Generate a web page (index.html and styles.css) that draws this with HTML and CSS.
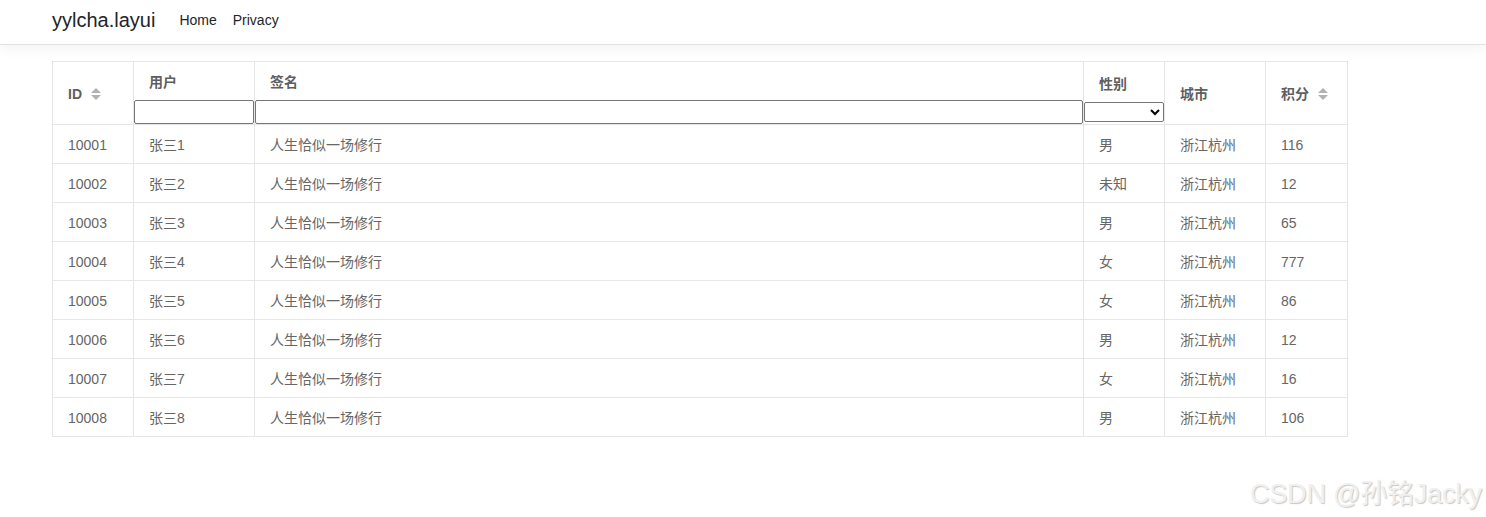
FILE: index.html
```html
<!DOCTYPE html>
<html lang="zh">
<head>
<meta charset="utf-8">
<title>yylcha.layui</title>
<link rel="stylesheet" href="styles.css">
</head>
<body>
<header class="navbar">
  <a class="brand" href="#">yylcha.layui</a>
  <nav class="nav">
    <a class="nav-link" href="#">Home</a>
    <a class="nav-link" href="#">Privacy</a>
  </nav>
</header>
<main class="main">
  <table class="grid">
    <colgroup>
      <col class="c-id"><col class="c-user"><col class="c-sign"><col class="c-sex"><col class="c-city"><col class="c-score">
    </colgroup>
    <thead>
      <tr>
        <th class="th-mid"><span class="th-label">ID</span><span class="sort"><svg width="10" height="14" viewBox="0 0 10 14"><path d="M0 6 L5 1 L10 6 Z" fill="#b2b2b2"/><path d="M0 8 L5 13 L10 8 Z" fill="#b2b2b2"/></svg></span></th>
        <th class="th-filter"><div class="th-text">用户</div><input class="filter-input" type="text"></th>
        <th class="th-filter"><div class="th-text">签名</div><input class="filter-input" type="text"></th>
        <th class="th-filter th-select"><div class="th-text">性别</div><select class="filter-select"><option></option><option>男</option><option>女</option><option>未知</option></select></th>
        <th class="th-mid"><span class="th-label">城市</span></th>
        <th class="th-mid"><span class="th-label">积分</span><span class="sort"><svg width="10" height="14" viewBox="0 0 10 14"><path d="M0 6 L5 1 L10 6 Z" fill="#b2b2b2"/><path d="M0 8 L5 13 L10 8 Z" fill="#b2b2b2"/></svg></span></th>
      </tr>
    </thead>
    <tbody>
      <tr><td>10001</td><td>张三1</td><td>人生恰似一场修行</td><td>男</td><td>浙江杭州</td><td>116</td></tr>
      <tr><td>10002</td><td>张三2</td><td>人生恰似一场修行</td><td>未知</td><td>浙江杭州</td><td>12</td></tr>
      <tr><td>10003</td><td>张三3</td><td>人生恰似一场修行</td><td>男</td><td>浙江杭州</td><td>65</td></tr>
      <tr><td>10004</td><td>张三4</td><td>人生恰似一场修行</td><td>女</td><td>浙江杭州</td><td>777</td></tr>
      <tr><td>10005</td><td>张三5</td><td>人生恰似一场修行</td><td>女</td><td>浙江杭州</td><td>86</td></tr>
      <tr><td>10006</td><td>张三6</td><td>人生恰似一场修行</td><td>男</td><td>浙江杭州</td><td>12</td></tr>
      <tr><td>10007</td><td>张三7</td><td>人生恰似一场修行</td><td>女</td><td>浙江杭州</td><td>16</td></tr>
      <tr><td>10008</td><td>张三8</td><td>人生恰似一场修行</td><td>男</td><td>浙江杭州</td><td>106</td></tr>
    </tbody>
  </table>
</main>
<div class="watermark">CSDN @孙铭Jacky</div>
</body>
</html>
```
FILE: styles.css
```css
* { box-sizing: border-box; }
html, body { margin: 0; padding: 0; }
body {
  font-family: "Liberation Sans", Arial, "Noto Sans CJK SC", sans-serif;
  color: #212529;
  background: #fff;
  width: 1486px;
  height: 517px;
  overflow: hidden;
  position: relative;
}
.navbar {
  height: 45px;
  display: flex;
  align-items: center;
  padding-left: 52px;
  border-bottom: 1px solid #e3e3e3;
  box-shadow: 0 4px 12px rgba(0,0,0,0.05);
}
.brand {
  font-size: 20px;
  color: #212529;
  text-decoration: none;
  margin-right: 16px;
  line-height: 30px;
  margin-top: -4px;
}
.nav { display: flex; margin-top: -4px; }
.nav-link {
  font-size: 14px;
  color: #212529;
  text-decoration: none;
  padding: 0 8px;
  line-height: 20px;
}
.main { padding: 16px 0 0 52px; }
.grid {
  width: 1295px;
  border-collapse: collapse;
  table-layout: fixed;
  font-size: 14px;
  color: #666;
  font-family: "Liberation Sans", Arial, "Noto Sans CJK SC", sans-serif;
}
.c-id { width: 81px; }
.c-user { width: 121px; }
.c-sign { width: 829px; }
.c-sex { width: 81px; }
.c-city { width: 101px; }
.c-score { width: 82px; }
.grid th, .grid td {
  border: 1px solid #e6e6e6;
  text-align: left;
}
.grid th {
  height: 63px;
  font-weight: bold;
  color: #5f5f5f;
  padding: 0;
}
.th-mid {
  vertical-align: middle;
  padding: 0 15px !important;
  line-height: 20px;
}
.th-label { display: inline-block; vertical-align: middle; }
.sort { display: inline-block; vertical-align: middle; margin-left: 9px; line-height: 0; }
.th-filter { vertical-align: top; }
.th-text {
  padding: 10px 15px 0;
  line-height: 20px;
  height: 38px;
}
.th-select .th-text { padding-top: 12px; height: 40px; }
.filter-input {
  display: block;
  width: 100%;
  height: 24px;
  margin: 0;
  border: 1px solid #767676;
  border-radius: 2px;
  background: #fff;
  padding: 1px 2px;
  font-size: 13px;
}
.filter-select {
  display: block;
  width: 100%;
  height: 20px;
  margin: 0;
  border: 1px solid #767676;
  border-radius: 2px;
  background: #fff;
  font-size: 13px;
  color: #000;
}
.grid td {
  height: 39px;
  padding: 10px 15px 8px;
  line-height: 20px;
  white-space: nowrap;
}
.watermark {
  position: absolute;
  left: 1250px;
  top: 478px;
  font-size: 27px;
  letter-spacing: -0.2px;
  line-height: 32px;
  font-weight: normal;
  font-family: "Liberation Sans", Arial, "Noto Sans CJK SC", sans-serif;
  color: #f0f0f0;
  text-shadow: 1px 1px 1px rgba(0,0,0,0.22);
  white-space: nowrap;
}
```
